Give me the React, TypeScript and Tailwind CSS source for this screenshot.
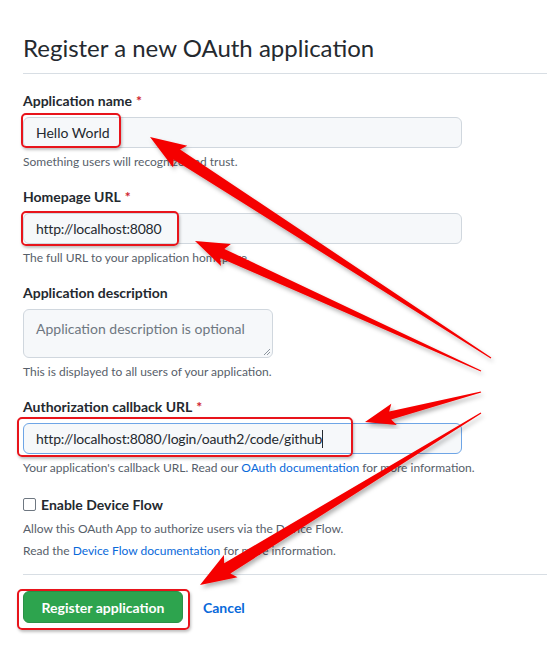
import React from 'react';

type Pt = [number, number];

// tapered annotation arrow: thin tail, wide shaft near the head, barbed head
const arrowPoints = (tail: Pt, tip: Pt, headLen = 28, headHalf = 12, shaftHalf = 5) => {
  const dx = tip[0] - tail[0];
  const dy = tip[1] - tail[1];
  const len = Math.hypot(dx, dy);
  const ux = dx / len;
  const uy = dy / len;
  const nx = -uy;
  const ny = ux;
  const bx = tip[0] - ux * headLen;
  const by = tip[1] - uy * headLen;
  const nb = (k: number): Pt => [bx + nx * k, by + ny * k];
  const pts: Pt[] = [
    [tail[0] + nx * 0.6, tail[1] + ny * 0.6],
    nb(shaftHalf),
    [bx + nx * headHalf - ux * 4, by + ny * headHalf - uy * 4],
    tip,
    [bx - nx * headHalf - ux * 4, by - ny * headHalf - uy * 4],
    nb(-shaftHalf),
    [tail[0] - nx * 0.6, tail[1] - ny * 0.6],
  ];
  return pts.map((p) => `${p[0].toFixed(1)},${p[1].toFixed(1)}`).join(' ');
};

const ARROWS: { tail: Pt; tip: Pt; head?: number; half?: number; shaft?: number }[] = [
  { tail: [491, 358], tip: [150, 137], head: 32, half: 13, shaft: 6 },
  { tail: [481, 371], tip: [195, 241], head: 30, half: 12, shaft: 5 },
  { tail: [481, 392], tip: [365, 422], head: 26, half: 11, shaft: 4 },
  { tail: [481, 413], tip: [200, 585], head: 32, half: 13, shaft: 6 },
];

const Note: React.FC<{ children: React.ReactNode }> = ({ children }) => (
  <p className="mt-[5px] text-[12px] leading-[18px] text-[#57606a]">{children}</p>
);

const Label: React.FC<{ text: string; required?: boolean }> = ({ text, required }) => (
  <label className="block text-[14px] leading-[20px] font-bold text-[#24292f]">
    {text}
    {required && <span className="ml-[4px] text-[#cf222e]">*</span>}
  </label>
);

const App: React.FC = () => {
  return (
    <div
      className="relative w-[547px] h-[654px] overflow-hidden bg-white text-[#24292f]"
      style={{ fontFamily: 'Lato, "Noto Sans", sans-serif' }}
    >
      <div className="pt-[30px] pl-[23px]">
        <h2 className="text-[24px] leading-[36px] font-normal pb-[7px] border-b border-[#d8dee4]">
          Register a new OAuth application
        </h2>

        <div className="mt-[17px]">
          <Label text="Application name" required />
          <div className="mt-[6px] w-[439px] h-[31px] rounded-[6px] border border-[#d0d7de] bg-[#f6f8fa] px-[12px] flex items-center text-[14px]">
            Hello World
          </div>
          <Note>Something users will recognize and trust.</Note>
        </div>

        <div className="mt-[16px]">
          <Label text="Homepage URL" required />
          <div className="mt-[6px] w-[439px] h-[31px] rounded-[6px] border border-[#d0d7de] bg-[#f6f8fa] px-[12px] flex items-center text-[14px] tracking-[-0.2px]">
            http://localhost:8080
          </div>
          <Note>The full URL to your application homepage.</Note>
        </div>

        <div className="mt-[16px]">
          <Label text="Application description" />
          <div className="relative mt-[6px] w-[250px] h-[49px] rounded-[6px] border border-[#d0d7de] bg-[#f6f8fa] px-[12px] pt-[8px] text-[14px] text-[#6e7781]">
            Application description is optional
            <svg className="absolute right-[1px] bottom-[1px]" width="8" height="8" viewBox="0 0 8 8">
              <path d="M7 1 L1 7 M7 4 L4 7" stroke="#8c959f" strokeWidth="1" />
            </svg>
          </div>
          <Note>This is displayed to all users of your application.</Note>
        </div>

        <div className="mt-[16px]">
          <Label text="Authorization callback URL" required />
          <div className="mt-[6px] w-[439px] h-[31px] rounded-[6px] border border-[#6ea5e6] bg-[#f6f8fa] px-[12px] flex items-center text-[14px] tracking-[-0.2px]">
            http://localhost:8080/login/oauth2/code/github
            <span className="inline-block w-px h-[18px] bg-[#24292f]" />
          </div>
          <Note>
            Your application's callback URL. Read our{' '}
            <span className="text-[#0969da]">OAuth documentation</span> for more information.
          </Note>
        </div>

        <div className="mt-[17px] flex items-center gap-[5px] h-[20px]">
          <span className="inline-block w-[13px] h-[13px] rounded-[2px] border border-[#6e7781] bg-white" />
          <span className="text-[14px] font-bold">Enable Device Flow</span>
        </div>
        <p className="mt-[6px] text-[12px] leading-[18px] text-[#57606a]">
          Allow this OAuth App to authorize users via the Device Flow.
        </p>
        <p className="mt-[4px] text-[12px] leading-[18px] text-[#57606a]">
          Read the <span className="text-[#0969da]">Device Flow documentation</span> for more information.
        </p>

        <div className="mt-[14px] border-t border-[#d8dee4]" />

        <div className="mt-[16px] flex items-center gap-[20px]">
          <button className="w-[160px] h-[32px] rounded-[6px] bg-[#2da44e] border border-[#2a9148] text-white text-[14px] font-bold">
            Register application
          </button>
          <span className="text-[14px] font-bold text-[#0969da]">Cancel</span>
        </div>
      </div>

      {/* annotation overlay */}
      <div className="absolute left-[21px] top-[113px] w-[100px] h-[35px] rounded-[5px] border-2 border-[#e8141b] shadow-[1px_2px_3px_rgba(0,0,0,0.25)]" />
      <div className="absolute left-[21px] top-[211px] w-[158px] h-[35px] rounded-[5px] border-2 border-[#e8141b] shadow-[1px_2px_3px_rgba(0,0,0,0.25)]" />
      <div className="absolute left-[17px] top-[417px] w-[336px] h-[40px] rounded-[5px] border-2 border-[#e8141b] shadow-[1px_2px_3px_rgba(0,0,0,0.25)]" />
      <div className="absolute left-[17px] top-[589px] w-[173px] h-[41px] rounded-[5px] border-2 border-[#e8141b] shadow-[1px_2px_3px_rgba(0,0,0,0.25)]" />

      <svg className="absolute inset-0 pointer-events-none" width="547" height="654" viewBox="0 0 547 654">
        <defs>
          <filter id="sh" x="-10%" y="-10%" width="120%" height="120%">
            <feDropShadow dx="2" dy="3" stdDeviation="2" floodColor="#000" floodOpacity="0.3" />
          </filter>
        </defs>
        {ARROWS.map((a, i) => (
          <polygon
            key={i}
            points={arrowPoints(a.tail, a.tip, a.head, a.half, a.shaft)}
            fill="#f50000"
            filter="url(#sh)"
          />
        ))}
      </svg>
    </div>
  );
};

export default App;
